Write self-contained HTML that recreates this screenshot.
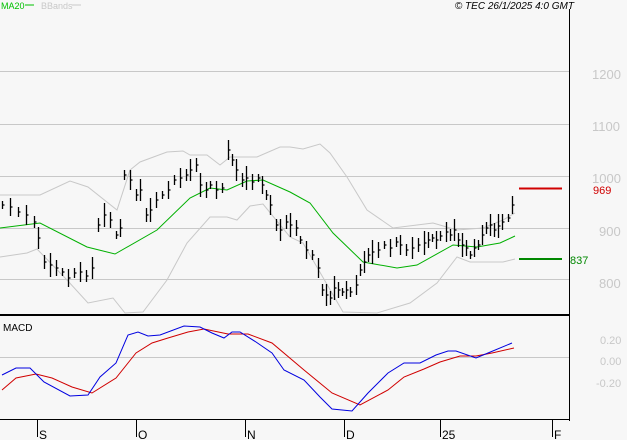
<!DOCTYPE html>
<html><head><style>
body{margin:0;background:#f7f7f7;width:627px;height:440px;overflow:hidden}
svg{display:block;font-family:"Liberation Sans",sans-serif}
</style></head><body>
<svg width="627" height="440" viewBox="0 0 627 440">
<rect width="627" height="440" fill="#f7f7f7"/>
<text x="1" y="9" font-size="9" fill="#00c000">MA20</text>
<line x1="25" y1="5" x2="34" y2="5" stroke="#00c000"/>
<text x="41" y="9" font-size="9" fill="#c8c8c8">BBands</text>
<line x1="72" y1="5" x2="81" y2="5" stroke="#c8c8c8"/>
<text x="574" y="9" font-size="10" font-style="italic" text-anchor="end" fill="#000">© TEC 26/1/2025 4:0 GMT</text>
<g stroke="#c8c8c8" stroke-width="1">
<line x1="0" y1="71.5" x2="569" y2="71.5"/><line x1="0" y1="124.5" x2="569" y2="124.5"/>
<line x1="0" y1="176.5" x2="569" y2="176.5"/><line x1="0" y1="228.5" x2="569" y2="228.5"/>
<line x1="0" y1="279.5" x2="569" y2="279.5"/><line x1="0" y1="357.5" x2="569" y2="357.5"/>
</g>
<g font-size="13" fill="#c8c8c8">
<text x="592" y="79">1200</text><text x="592" y="131">1100</text><text x="592" y="183">1000</text>
<text x="599" y="236">900</text><text x="599" y="288">800</text>
</g>
<g font-size="11" fill="#c8c8c8">
<text x="600" y="344">0.20</text><text x="600" y="365">0.00</text><text x="596" y="387">-0.20</text>
</g>
<polyline fill="none" stroke="#c8c8c8" points="0,195 40,195 70,181 88,187 117,210 130,170 140,162 167,152 183,151 190,155 207,155 220,165 230,157 257,157 280,147 290,147 303,149 320,144 330,153 347,177 367,210 393,228 433,223 457,230 483,228 503,220 515,213"/>
<polyline fill="none" stroke="#c8c8c8" points="0,257 27,253 37,249 67,280 88,303 113,298 125,313 143,312 167,280 187,243 210,217 227,217 237,220 250,206 263,204 290,237 303,243 343,312 377,313 410,303 437,283 457,257 470,262 503,262 515,259"/>
<polyline fill="none" stroke="#00b000" points="0,228 40,223 87,247 115,254 157,230 190,198 210,188 227,190 247,181 263,180 290,192 310,203 333,233 363,262 397,268 417,265 453,245 477,247 500,243 515,236"/>
<path id="bars" fill="none" stroke="#000" stroke-width="1.3"/>
<line x1="519" y1="188.5" x2="562" y2="188.5" stroke="#d00000" stroke-width="2"/>
<line x1="519" y1="259" x2="562" y2="259" stroke="#008800" stroke-width="2"/>
<text x="593" y="194" font-size="11" fill="#d00000">969</text>
<text x="570" y="264" font-size="11" fill="#008800">837</text>
<line x1="569.5" y1="9" x2="569.5" y2="421" stroke="#000"/>
<line x1="0" y1="315" x2="569" y2="315" stroke="#000" stroke-width="2"/>
<line x1="0" y1="419.5" x2="569" y2="419.5" stroke="#000"/>
<text x="3" y="331" font-size="10" fill="#000">MACD</text>
<polyline fill="none" stroke="#d00000" points="2,390 16,378 36,374 52,378 72,387 92,393 116,378 136,353 152,343 168,338 188,332 204,329 228,334 248,334 272,343 304,370 332,393 360,405 388,390 404,377 424,369 440,362 460,356 476,356 492,353 514,348"/>
<polyline fill="none" stroke="#0000e0" points="2,375 16,368 30,368 44,382 70,396 88,395 100,377 116,363 128,335 138,332 148,336 160,335 184,326 200,327 212,333 224,338 232,332 240,332 256,342 272,353 284,370 304,380 320,397 332,409 352,411 368,393 388,373 404,363 420,363 436,355 448,351 456,351 476,358 488,353 512,343"/>
<g stroke="#000">
<line x1="37.5" y1="420" x2="37.5" y2="437"/><line x1="136.5" y1="420" x2="136.5" y2="437"/>
<line x1="245.5" y1="420" x2="245.5" y2="437"/><line x1="344.5" y1="420" x2="344.5" y2="437"/>
<line x1="440.5" y1="420" x2="440.5" y2="437"/><line x1="552.5" y1="420" x2="552.5" y2="437"/>
</g>
<g font-size="12" fill="#000">
<text x="39" y="439">S</text><text x="138" y="439">O</text><text x="247" y="439">N</text>
<text x="346" y="439">D</text><text x="442" y="439">25</text><text x="554" y="439">F</text>
</g>
</svg>
<script>
var p=[2,205,10,207,18,212,26,215,34,222,38,238,44,262,50,265,56,268,62,272,68,278,74,273,80,272,86,276,92,268,98,225,104,215,110,220,116,235,120,228,124,175,130,180,136,195,140,190,146,215,150,210,156,200,162,195,168,190,174,180,180,178,186,175,190,170,196,165,200,185,206,190,210,185,216,190,222,188,228,150,232,160,236,170,242,180,246,178,252,182,258,178,262,185,266,195,270,205,276,225,280,230,286,222,290,225,296,228,300,240,306,250,312,255,318,268,322,290,326,295,330,298,334,288,338,290,342,292,346,290,350,292,356,285,360,270,364,262,368,255,372,252,378,250,384,245,390,248,396,242,400,245,406,250,412,248,418,245,424,243,428,240,432,238,436,240,440,236,446,232,450,235,454,230,458,240,462,245,466,248,470,255,474,248,478,245,482,235,486,228,490,225,494,230,498,226,502,222,508,218,512,205];
var d="";for(var i=0;i<p.length;i+=2){var x=p[i]+.5,y=p[i+1],h=4+(i*7%9);d+="M"+x+" "+(y-h)+"V"+(y+h)+"M"+x+" "+y+"h2";}
document.getElementById("bars").setAttribute("d",d);
</script>
</body></html>
